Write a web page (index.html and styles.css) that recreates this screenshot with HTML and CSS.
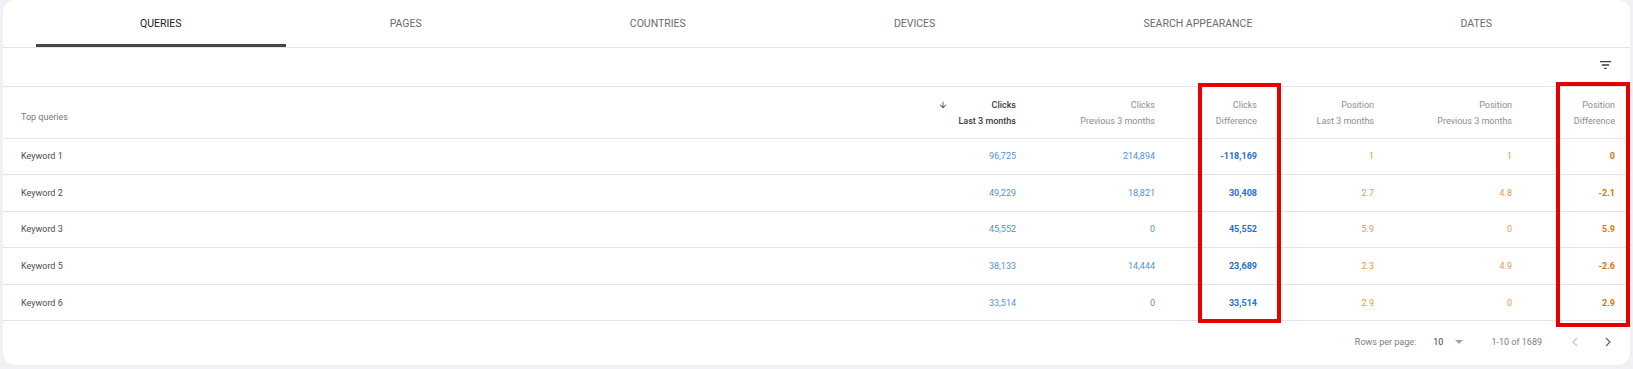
FILE: index.html
```html
<!DOCTYPE html>
<html lang="en">

<head>
  <meta charset="UTF-8">
  <title>Performance</title>
  <link rel="stylesheet" href="styles.css">
</head>

<body>
  <div class="card">
    <div class="tabs">
      <div class="tab active">Queries</div>
      <div class="tab">Pages</div>
      <div class="tab">Countries</div>
      <div class="tab">Devices</div>
      <div class="tab">Search appearance</div>
      <div class="tab">Dates</div>
    </div>

    <div class="toolbar">
      <svg class="filter" width="11" height="8" viewBox="3 6 18 12" preserveAspectRatio="none">
        <path d="M10 18h4v-2h-4v2zM3 6v2h18V6H3zm3 7h12v-2H6v2z" fill="#3c4043" />
      </svg>
    </div>

    <table class="grid">
      <colgroup>
        <col>
        <col style="width:140px">
        <col style="width:139px">
        <col style="width:102px">
        <col style="width:117px">
        <col style="width:138px">
        <col style="width:103px">
      </colgroup>
      <thead>
        <tr>
          <th class="name">Top queries</th>
          <th class="sorted">
            <div class="th-inner">
              <svg class="arrow" width="10" height="10" viewBox="0 0 24 24">
                <path d="M20 12l-1.41-1.41L13 16.17V4h-2v12.17l-5.58-5.59L4 12l8 8 8-8z" fill="#3c4043" />
              </svg>
              <div>Clicks<br>Last 3 months</div>
            </div>
          </th>
          <th>Clicks<br>Previous 3 months</th>
          <th>Clicks<br>Difference</th>
          <th>Position<br>Last 3 months</th>
          <th>Position<br>Previous 3 months</th>
          <th>Position<br>Difference</th>
        </tr>
      </thead>
      <tbody>
        <tr>
          <td class="name">Keyword 1</td>
          <td class="clk">96,725</td>
          <td class="clk">214,894</td>
          <td class="clk diff">-118,169</td>
          <td class="pos">1</td>
          <td class="pos">1</td>
          <td class="pos diff">0</td>
        </tr>
        <tr>
          <td class="name">Keyword 2</td>
          <td class="clk">49,229</td>
          <td class="clk">18,821</td>
          <td class="clk diff">30,408</td>
          <td class="pos">2.7</td>
          <td class="pos">4.8</td>
          <td class="pos diff">-2.1</td>
        </tr>
        <tr>
          <td class="name">Keyword 3</td>
          <td class="clk">45,552</td>
          <td class="clk">0</td>
          <td class="clk diff">45,552</td>
          <td class="pos">5.9</td>
          <td class="pos">0</td>
          <td class="pos diff">5.9</td>
        </tr>
        <tr>
          <td class="name">Keyword 5</td>
          <td class="clk">38,133</td>
          <td class="clk">14,444</td>
          <td class="clk diff">23,689</td>
          <td class="pos">2.3</td>
          <td class="pos">4.9</td>
          <td class="pos diff">-2.6</td>
        </tr>
        <tr>
          <td class="name">Keyword 6</td>
          <td class="clk">33,514</td>
          <td class="clk">0</td>
          <td class="clk diff">33,514</td>
          <td class="pos">2.9</td>
          <td class="pos">0</td>
          <td class="pos diff">2.9</td>
        </tr>
      </tbody>
    </table>

    <div class="pager">
      <span class="rows-label">Rows per page:</span>
      <span class="rows-value">10</span>
      <span class="caret"></span>
      <span class="range">1-10 of 1689</span>
      <svg class="chev prev" width="6" height="10" viewBox="0 0 6 10">
        <polyline points="5,1 1,5 5,9" fill="none" stroke="#c2c5c9" stroke-width="1.2" />
      </svg>
      <svg class="chev" width="6" height="10" viewBox="0 0 6 10">
        <polyline points="1,1 5,5 1,9" fill="none" stroke="#5f6368" stroke-width="1.2" />
      </svg>
    </div>

    <!-- highlight boxes drawn over the table -->
    <div class="mark mark-clicks"></div>
    <div class="mark mark-position"></div>
  </div>
</body>

</html>
```

FILE: styles.css
```css
:root {
  --page-bg: #eff1f6;
  --line: #e3e4e6;
  --text: #4a4e52;
  --muted: #8a8e93;
  --blue: #4f91e2;
  --blue-strong: #1e6fd4;
  --orange: #eb9446;
  --orange-strong: #d9730f;
  --mark: #e60000;
}

body {
  margin: 0;
  padding: 0;
  background-color: var(--page-bg);
  font-family: Roboto, "Liberation Sans", sans-serif;
}

.card {
  position: relative;
  margin: 0 3px;
  height: 365px;
  background-color: #fff;
  border-radius: 12px;
  overflow: hidden;
}

/* tabs */
.tabs {
  display: flex;
  height: 48px;
  padding: 0 34px 0 33px;
  box-sizing: border-box;
  border-bottom: 1px solid var(--line);
}

.tab {
  flex: 1 1 auto;
  display: flex;
  align-items: center;
  justify-content: center;
  font-size: 10.5px;
  color: #686c71;
  text-transform: uppercase;
  box-sizing: border-box;
}

.tab.active {
  color: #202124;
  border-bottom: 3px solid #474747;
  padding-top: 3px;
}

/* toolbar */
.toolbar {
  display: flex;
  align-items: center;
  justify-content: flex-end;
  height: 39px;
  padding: 0 19px 5px 0;
  box-sizing: border-box;
  border-bottom: 1px solid var(--line);
}

/* table */
.grid {
  width: 100%;
  border-collapse: collapse;
  table-layout: fixed;
  font-size: 9px;
}

.grid th,
.grid td {
  padding: 0 15px 0 0;
  text-align: right;
  border-bottom: 1px solid var(--line);
  white-space: nowrap;
}

.grid thead tr {
  height: 51px;
}

.grid tbody tr {
  height: 36.6px;
}

.grid th {
  font-weight: 400;
  color: var(--muted);
  line-height: 16px;
  padding-top: 2px;
}

.grid .name {
  text-align: left;
  padding-left: 18px;
  color: var(--text);
}

.grid th.name {
  color: #75797e;
  padding-top: 9px;
}

.grid th.sorted {
  color: #3c4043;
  font-weight: 500;
}

.th-inner {
  display: flex;
  justify-content: flex-end;
  align-items: flex-start;
  gap: 10px;
}

.arrow {
  margin-top: 3px;
}

.clk {
  color: var(--blue);
}

.pos {
  color: var(--orange);
}

.clk.diff {
  color: var(--blue-strong);
  font-weight: 700;
}

.pos.diff {
  color: var(--orange-strong);
  font-weight: 700;
}

/* pager */
.pager {
  display: flex;
  align-items: center;
  justify-content: flex-end;
  height: 42px;
  padding-right: 19px;
  font-size: 9px;
  color: #7a7e83;
}

.rows-label {
  margin-right: 17px;
}

.rows-value {
  color: #3c4043;
  margin-right: 12px;
}

.caret {
  width: 0;
  height: 0;
  border-left: 4px solid transparent;
  border-right: 4px solid transparent;
  border-top: 4px solid #a0a4a8;
  margin-right: 28px;
}

.range {
  margin-right: 30px;
}

.chev.prev {
  margin-right: 27px;
}

/* red highlight frames */
.mark {
  position: absolute;
  box-sizing: border-box;
  border: 4px solid var(--mark);
}

.mark-clicks {
  left: 1195px;
  top: 83px;
  width: 83px;
  height: 240px;
}

.mark-position {
  left: 1553px;
  top: 82px;
  width: 74px;
  height: 245px;
}
```
